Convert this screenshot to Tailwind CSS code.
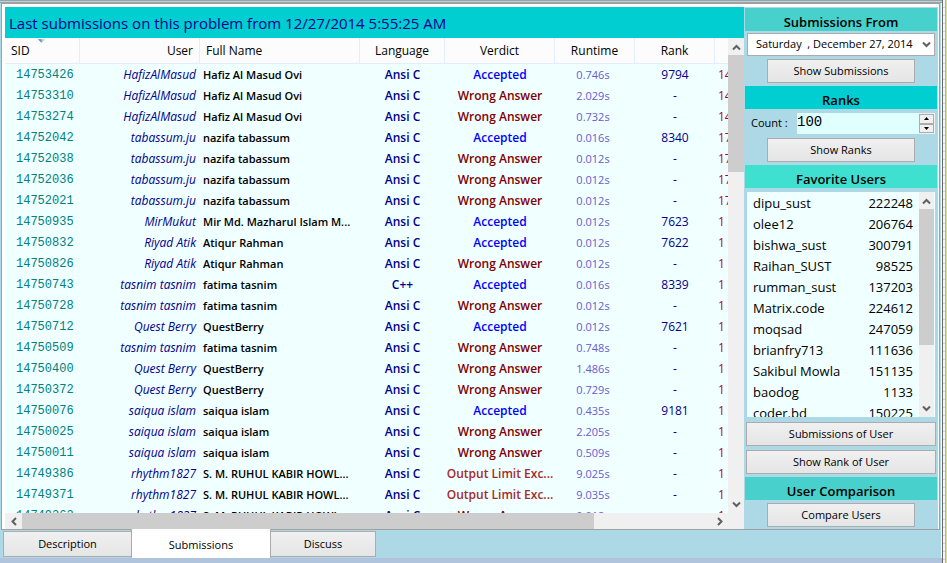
<!DOCTYPE html>
<html lang="en">
<head>
<meta charset="utf-8">
<title>Problem submissions</title>
<script src="https://cdn.jsdelivr.net/npm/@tailwindcss/browser@4"></script>
</head>
<body class="flex h-screen overflow-hidden bg-[#add8e6] font-['Open_Sans','Noto_Sans',sans-serif] text-xs text-black">
<div class="flex min-w-0 flex-1 flex-col">
  <!-- lower edge of the tab strip above -->
  <div class="h-[3px] shrink-0 border-y border-[#a0a0a0] bg-[#add8e6]"></div>

  <main class="flex min-h-0 flex-1 flex-col border-r border-white pl-px pr-px">
    <div class="flex min-h-0 flex-1 border border-[#a0a0a0] bg-white pl-[3px] pt-[3px] pr-px">
      <section class="flex min-w-0 flex-1 flex-col" aria-label="Submissions">
        <h1 class="h-[31px] shrink-0 truncate bg-[#00ced1] px-1 text-[15px] leading-8 text-[#00008b]">Last submissions on this problem from 12/27/2014 5:55:25 AM</h1>
        <div class="flex min-h-0 flex-1 bg-[#f0ffff]">
          <div class="min-w-0 flex-1 overflow-hidden">
            <table class="w-full table-fixed border-separate border-spacing-0">
              <colgroup>
                <col class="w-[75px]"><col class="w-[120px]"><col class="w-[160px]"><col class="w-[85px]"><col class="w-[110px]"><col class="w-[80px]"><col class="w-[80px]"><col>
              </colgroup>
              <thead class="bg-[#fcfcfc]">
                <tr class="h-[26px]">
                  <th class="relative border-r border-b border-[#e3eefb] px-1.5 text-left font-normal">SID
                    <svg class="absolute left-[33px] top-px" width="7" height="4" viewBox="0 0 8 4" aria-hidden="true"><path d="M0 0h8L4 4z" fill="#a9cfe2"/><path d="M0 0h4v4z" fill="#5f93b0"/></svg></th>
                  <th class="border-r border-b border-[#e3eefb] px-1.5 text-right font-normal">User</th>
                  <th class="border-r border-b border-[#e3eefb] px-1.5 text-left font-normal">Full Name</th>
                  <th class="border-r border-b border-[#e3eefb] font-normal">Language</th>
                  <th class="border-r border-b border-[#e3eefb] font-normal">Verdict</th>
                  <th class="border-r border-b border-[#e3eefb] font-normal">Runtime</th>
                  <th class="border-r border-b border-[#e3eefb] font-normal">Rank</th>
                  <th class="border-b border-[#e3eefb]"></th>
                </tr>
              </thead>
              <tbody id="submissions"></tbody>
            </table>
          </div>
          <div class="flex w-4 shrink-0 flex-col bg-[#f0f0f0]">
            <button class="flex h-[17px] items-center justify-center" aria-label="Scroll up"><svg width="9" height="8" viewBox="0 0 9 8"><path d="M1 6.5 4.5 3 8 6.5" fill="none" stroke="#606060" stroke-width="2"/></svg></button>
            <div class="h-[117px] bg-[#cdcdcd]"></div>
            <button class="mt-auto flex h-[17px] items-center justify-center" aria-label="Scroll down"><svg width="9" height="8" viewBox="0 0 9 8"><path d="M1 1.5 4.5 5 8 1.5" fill="none" stroke="#606060" stroke-width="2"/></svg></button>
          </div>
        </div>
        <div class="flex h-4 shrink-0 bg-[#f0f0f0] pr-4">
          <button class="flex w-[17px] items-center justify-center" aria-label="Scroll left"><svg width="8" height="9" viewBox="0 0 8 9"><path d="M6 1 2.5 4.5 6 8" fill="none" stroke="#606060" stroke-width="2"/></svg></button>
          <div class="flex flex-1"><div class="w-[83%] bg-[#cdcdcd]"></div></div>
          <button class="flex w-[17px] items-center justify-center" aria-label="Scroll right"><svg width="8" height="9" viewBox="0 0 8 9"><path d="M2 1 5.5 4.5 2 8" fill="none" stroke="#606060" stroke-width="2"/></svg></button>
        </div>
      </section>

      <aside class="flex w-[194px] shrink-0 flex-col bg-[#add8e6] px-px pt-px">
        <h2 class="h-[23px] shrink-0 bg-[#48d1cc] text-center text-[13px] font-semibold leading-7">Submissions From</h2>
        <div class="mx-0.5 mt-0.5 flex h-[23px] shrink-0 items-center border border-[#ababab] bg-white">
          <input class="min-w-0 flex-1 whitespace-pre pl-2 text-[11px] outline-none" aria-label="Submissions from date" value="Saturday  , December 27, 2014">
          <button class="flex w-4 items-center justify-center" aria-label="Open calendar"><svg width="9" height="8" viewBox="0 0 9 8"><path d="M1 1.5 4.5 5 8 1.5" fill="none" stroke="#606060" stroke-width="2"/></svg></button>
        </div>
        <button class="mx-[22px] mt-[3px] h-6 shrink-0 border border-[#acacac] bg-linear-to-b from-[#f0f0f0] to-[#e5e5e5] text-[11px]">Show Submissions</button>

        <h2 class="mt-[3px] h-[23px] shrink-0 bg-[#00ced1] text-center text-[13px] font-semibold leading-7">Ranks</h2>
        <div class="mx-0.5 mt-1 flex h-[21px] shrink-0">
          <label for="count" class="w-[50px] pl-1 text-[11px] leading-5">Count :</label>
          <input id="count" class="min-w-0 flex-1 bg-[#e0ffff] pb-1 font-['Liberation_Mono',monospace] text-sm outline-none" inputmode="numeric" value="100">
          <div class="flex w-4 flex-col bg-[#f0f0f0] py-px pr-px">
            <button class="flex flex-1 items-center justify-center border border-[#acacac]" aria-label="Increase count"><svg width="5" height="3" viewBox="0 0 5 3"><path d="M0 3h5L2.5 0z"/></svg></button>
            <button class="flex flex-1 items-center justify-center border border-[#acacac]" aria-label="Decrease count"><svg width="5" height="3" viewBox="0 0 5 3"><path d="M0 0h5L2.5 3z"/></svg></button>
          </div>
        </div>
        <button class="mx-[22px] mt-1 h-6 shrink-0 border border-[#acacac] bg-linear-to-b from-[#f0f0f0] to-[#e5e5e5] text-[11px]">Show Ranks</button>

        <h2 class="mt-[3px] h-[23px] shrink-0 bg-[#40e0d0] text-center text-[13px] font-semibold leading-7">Favorite Users</h2>
        <div class="mx-0.5 mt-1 flex min-h-0 flex-1 bg-[#f0ffff]">
          <div class="min-w-0 flex-1 overflow-hidden">
            <table class="w-full" aria-label="Favorite users"><tbody id="favorites"></tbody></table>
          </div>
          <div class="mr-px flex w-[15px] shrink-0 flex-col bg-[#f0f0f0]">
            <button class="flex h-[17px] items-center justify-center" aria-label="Scroll up"><svg width="9" height="8" viewBox="0 0 9 8"><path d="M1 6.5 4.5 3 8 6.5" fill="none" stroke="#606060" stroke-width="2"/></svg></button>
            <div class="h-[136px] bg-[#cdcdcd]"></div>
            <button class="mt-auto flex h-[17px] items-center justify-center" aria-label="Scroll down"><svg width="9" height="8" viewBox="0 0 9 8"><path d="M1 1.5 4.5 5 8 1.5" fill="none" stroke="#606060" stroke-width="2"/></svg></button>
          </div>
        </div>
        <button class="mx-px mt-[5px] h-6 shrink-0 border border-[#acacac] bg-linear-to-b from-[#f0f0f0] to-[#e5e5e5] text-[11px]">Submissions of User</button>
        <button class="mx-px mt-1 h-6 shrink-0 border border-[#acacac] bg-linear-to-b from-[#f0f0f0] to-[#e5e5e5] text-[11px]">Show Rank of User</button>

        <h2 class="mt-[3px] h-[23px] shrink-0 bg-[#48d1cc] text-center text-[13px] font-semibold leading-7">User Comparison</h2>
        <button class="mx-[22px] mt-[3px] mb-0.5 h-6 shrink-0 border border-[#acacac] bg-linear-to-b from-[#f0f0f0] to-[#e5e5e5] text-[11px]">Compare Users</button>
      </aside>
    </div>

    <nav class="flex h-7 shrink-0 items-start pl-0.5 text-[11px]" role="tablist">
      <button role="tab" class="mt-px h-[26px] w-[128px] border border-r-0 border-[#acacac] bg-linear-to-b from-[#f0f0f0] to-[#e5e5e5]">Description</button>
      <button role="tab" aria-selected="true" class="-mt-px h-[29px] w-[140px] border-x border-[#acacac] bg-white pt-1">Submissions</button>
      <button role="tab" class="mt-px h-[26px] w-[105px] border border-l-0 border-[#acacac] bg-linear-to-b from-[#f0f0f0] to-[#e5e5e5]">Discuss</button>
    </nav>
  </main>
  <div class="h-[5px] shrink-0 bg-[#b0c4de]"></div>
</div>
<div class="flex w-[5px] shrink-0">
  <div class="w-px bg-[#696969]"></div>
  <div class="w-0.5 bg-[repeating-linear-gradient(#f4f6fb_0_7px,#c9d3e6_7px_8px)]"></div>
  <div class="w-px bg-[#9db9d9]"></div>
  <div class="w-px bg-[#d8dc8c]"></div>
</div>

<script>
const submissions = [
  ["14753426", "HafizAlMasud", "Hafiz Al Masud Ovi", "Ansi C", "Accepted", "0.746s", "9794", "14"],
  ["14753310", "HafizAlMasud", "Hafiz Al Masud Ovi", "Ansi C", "Wrong Answer", "2.029s", "-", "14"],
  ["14753274", "HafizAlMasud", "Hafiz Al Masud Ovi", "Ansi C", "Wrong Answer", "0.732s", "-", "14"],
  ["14752042", "tabassum.ju", "nazifa tabassum", "Ansi C", "Accepted", "0.016s", "8340", "17"],
  ["14752038", "tabassum.ju", "nazifa tabassum", "Ansi C", "Wrong Answer", "0.012s", "-", "17"],
  ["14752036", "tabassum.ju", "nazifa tabassum", "Ansi C", "Wrong Answer", "0.012s", "-", "17"],
  ["14752021", "tabassum.ju", "nazifa tabassum", "Ansi C", "Wrong Answer", "0.012s", "-", "17"],
  ["14750935", "MirMukut", "Mir Md. Mazharul Islam M...", "Ansi C", "Accepted", "0.012s", "7623", "1"],
  ["14750832", "Riyad Atik", "Atiqur Rahman", "Ansi C", "Accepted", "0.012s", "7622", "1"],
  ["14750826", "Riyad Atik", "Atiqur Rahman", "Ansi C", "Wrong Answer", "0.012s", "-", "1"],
  ["14750743", "tasnim tasnim", "fatima tasnim", "C++", "Accepted", "0.016s", "8339", "1"],
  ["14750728", "tasnim tasnim", "fatima tasnim", "Ansi C", "Wrong Answer", "0.012s", "-", "1"],
  ["14750712", "Quest Berry", "QuestBerry", "Ansi C", "Accepted", "0.012s", "7621", "1"],
  ["14750509", "tasnim tasnim", "fatima tasnim", "Ansi C", "Wrong Answer", "0.748s", "-", "1"],
  ["14750400", "Quest Berry", "QuestBerry", "Ansi C", "Wrong Answer", "1.486s", "-", "1"],
  ["14750372", "Quest Berry", "QuestBerry", "Ansi C", "Wrong Answer", "0.729s", "-", "1"],
  ["14750076", "saiqua islam", "saiqua islam", "Ansi C", "Accepted", "0.435s", "9181", "1"],
  ["14750025", "saiqua islam", "saiqua islam", "Ansi C", "Wrong Answer", "2.205s", "-", "1"],
  ["14750011", "saiqua islam", "saiqua islam", "Ansi C", "Wrong Answer", "0.509s", "-", "1"],
  ["14749386", "rhythm1827", "S. M. RUHUL KABIR HOWL...", "Ansi C", "Output Limit Exc...", "9.025s", "-", "1"],
  ["14749371", "rhythm1827", "S. M. RUHUL KABIR HOWL...", "Ansi C", "Output Limit Exc...", "9.035s", "-", "1"],
  ["14749363", "rhythm1827", "S. M. RUHUL KABIR HOWL...", "Ansi C", "Wrong Answer", "0.012s", "-", "1"]
];
const verdictColor = {
  "Accepted": "text-[#0000ff]",
  "Wrong Answer": "text-[#800000]",
  "Output Limit Exc...": "text-[#a52a2a]"
};
document.getElementById("submissions").innerHTML = submissions.map(([sid, user, name, lang, verdict, time, rank, ago]) => `
  <tr class="h-[21px] whitespace-nowrap leading-5">
    <td class="pl-[11px] font-['Liberation_Mono',monospace] text-[#008080]">${sid}</td>
    <td class="pr-1 text-right italic text-[#00008b]">${user}</td>
    <td class="overflow-hidden pl-[3px] text-[11px] font-semibold">${name}</td>
    <td class="text-center font-semibold text-[#00008b]">${lang}</td>
    <td class="text-center font-semibold ${verdictColor[verdict]}">${verdict}</td>
    <td class="pr-1 text-center text-[11px] text-[#6a5acd]">${time}</td>
    <td class="text-center text-[#00008b]">${rank}</td>
    <td class="overflow-hidden pl-[3px] text-[#b00030]">${ago}</td>
  </tr>`).join("");

const favorites = [
  ["dipu_sust", 222248], ["olee12", 206764], ["bishwa_sust", 300791], ["Raihan_SUST", 98525],
  ["rumman_sust", 137203], ["Matrix.code", 224612], ["moqsad", 247059], ["brianfry713", 111636],
  ["Sakibul Mowla", 151135], ["baodog", 1133], ["coder.bd", 150225]
];
document.getElementById("favorites").innerHTML = favorites.map(([name, id]) => `
  <tr class="h-[21px] text-[13px] leading-5"><td class="pl-1.5">${name}</td><td class="pr-1.5 text-right">${id}</td></tr>`).join("");
</script>
</body>
</html>
